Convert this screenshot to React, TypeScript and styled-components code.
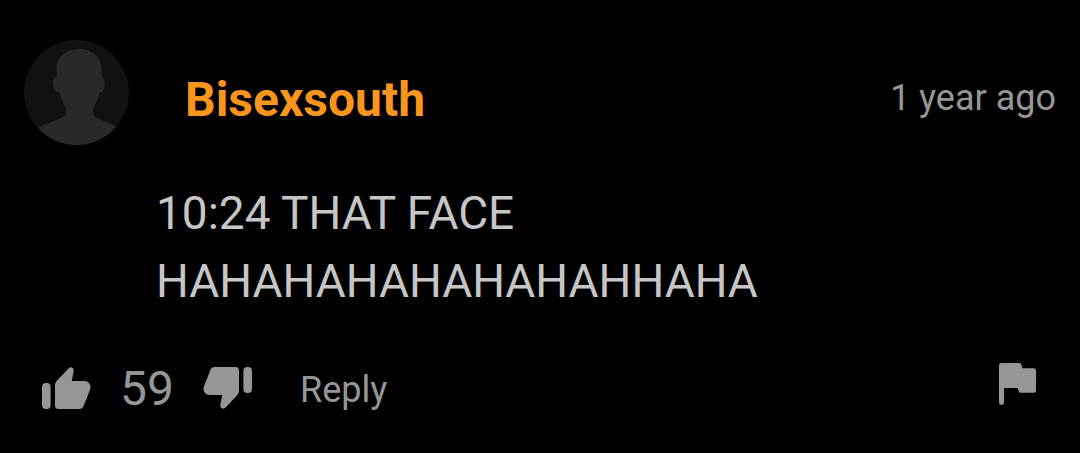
import React from 'react';
import styled, { createGlobalStyle } from 'styled-components';

const GlobalStyle = createGlobalStyle`
  * { box-sizing: border-box; }
  body {
    margin: 0;
    background: #000;
    font-family: Roboto, "Liberation Sans", sans-serif;
  }
`;

const Comment = styled.article`
  padding: 40px 24px 32px;
`;

const Header = styled.header`
  display: flex;
  align-items: center;
`;

const Avatar = styled.svg`
  flex: none;
  width: 105px;
  height: 105px;
  margin-right: 56px;
`;

const Author = styled.a`
  flex: 1;
  padding-top: 14px;
  color: #f8951d;
  font-size: 48px;
  font-weight: 700;
  line-height: 56px;
  text-decoration: none;
`;

const Posted = styled.time`
  padding-top: 10px;
  color: #969696;
  font-size: 36px;
  line-height: 48px;
`;

const Message = styled.p`
  margin: 34px 0 0 132px;
  max-width: 720px;
  color: #c6c6c6;
  font-size: 46px;
  line-height: 68px;
`;

const Actions = styled.footer`
  display: flex;
  align-items: center;
  margin-top: 48px;
  padding: 0 20px 0 18px;
  color: #969696;
`;

const ActionButton = styled.button<{ $corner?: boolean }>`
  display: flex;
  padding: 0;
  border: 0;
  background: none;
  color: #969696;
  font-family: inherit;
  font-size: 36px;
  line-height: 46px;
  cursor: pointer;
  margin-left: ${(p) => (p.$corner ? 'auto' : '0')};
  align-self: ${(p) => (p.$corner ? 'flex-start' : 'auto')};
`;

const Score = styled.span`
  margin: 0 29px;
  padding-top: 2px;
  font-size: 48px;
  line-height: 48px;
`;

const ReplySlot = styled.div`
  margin-left: 48px;
  padding-top: 4px;
`;

const Thumb = ({ down = false }: { down?: boolean }) => (
  <svg width="49" height="42" viewBox="0 0 49 42" fill="currentColor" aria-hidden="true">
    <g transform={down ? 'rotate(180 24.5 21)' : undefined}>
      <rect x="0" y="16" width="8.6" height="26" rx="4" />
      <path d="M13 18.2Q13 15.7 14.8 13.8L26.4 1.4Q28.4-.6 30.6 1Q32 2 31.7 4L29.8 14H42.2Q46 14 47.7 17Q49.3 19.8 47.9 23L41.6 39Q40.4 42 37.4 42H16.5Q13 42 13 38.5Z" />
    </g>
  </svg>
);

const Flag = () => (
  <svg width="37" height="42" viewBox="0 0 37 42" fill="currentColor" aria-hidden="true">
    <path d="M0 2.2Q0 0 2.2 0H20.3Q22.2 0 22.6 1.9L23.3 5.2H34.8Q37 5.2 37 7.4V27.6Q37 29.8 34.8 29.8H21.8Q19.9 29.8 19.5 27.9L18.8 24.9H5V39.6Q5 42 2.5 42Q0 42 0 39.6Z" />
  </svg>
);

export default function App() {
  return (
    <>
      <GlobalStyle />
      <Comment>
        <Header>
          <Avatar viewBox="0 0 105 105" aria-hidden="true">
            <defs>
              <clipPath id="avatar-round">
                <circle cx="52.5" cy="52.5" r="52.5" />
              </clipPath>
            </defs>
            <g clipPath="url(#avatar-round)">
              <rect width="105" height="105" fill="#111" />
              <path
                fill="#292929"
                d="M55 9C41 9 32.5 18 32.5 29V37C28.5 38 28.5 43 30 48C31 52 33 52.5 35.5 52.5C36.5 58 38.5 62 41.5 67V76C34 80 24 83 14.5 86.7L0 105H105L92 86.7C84 82 76 80 69.5 76V67C72.5 62 74.5 58 75.5 52.5C78 52.5 79.5 51 80.3 47C81.5 42 80.5 38 77.5 37V29C77.5 18 69 9 55 9Z"
              />
            </g>
          </Avatar>
          <Author href="#profile">Bisexsouth</Author>
          <Posted>1 year ago</Posted>
        </Header>
        <Message>
          10:24 THAT FACE
          <br />
          HAHAHAHAHAHAHAHHAHA
        </Message>
        <Actions>
          <ActionButton type="button" aria-label="Like">
            <Thumb />
          </ActionButton>
          <Score>59</Score>
          <ActionButton type="button" aria-label="Dislike">
            <Thumb down />
          </ActionButton>
          <ReplySlot>
            <ActionButton type="button">Reply</ActionButton>
          </ReplySlot>
          <ActionButton type="button" aria-label="Report" $corner>
            <Flag />
          </ActionButton>
        </Actions>
      </Comment>
    </>
  );
}
